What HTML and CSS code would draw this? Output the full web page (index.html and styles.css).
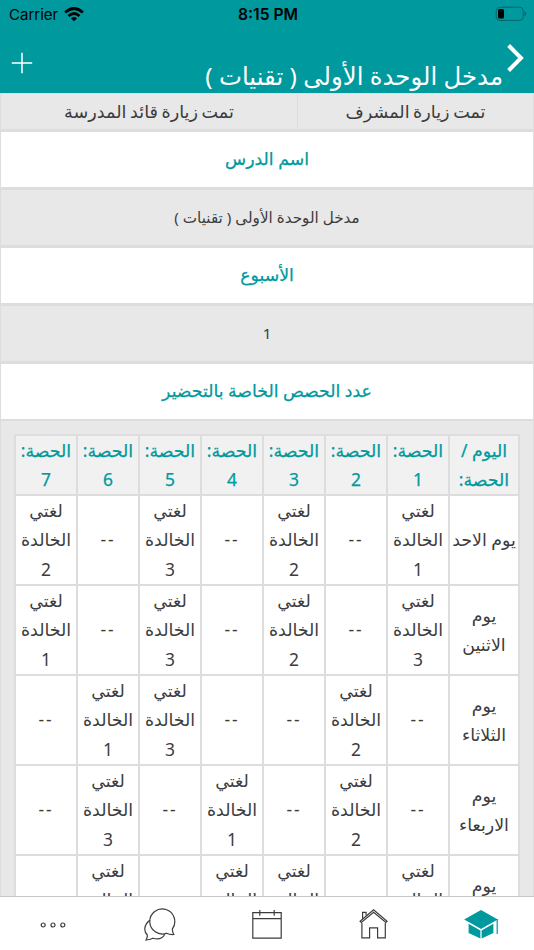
FILE: index.html
```html
<!DOCTYPE html>
<html lang="ar" dir="rtl">

<head>
    <meta charset="UTF-8">
    <meta name="viewport" content="width=device-width, initial-scale=1.0">
    <title>مدخل الوحدة الأولى</title>
    <link rel="stylesheet" href="styles.css">
</head>

<body>
    <header class="header">
        <div class="status" dir="ltr">
            <div class="carrier">
                <span>Carrier</span>
                <svg width="20" height="15" viewBox="0 0 20 15">
                    <g fill="none" stroke="#000" stroke-width="2.7">
                        <path d="M1.1 5.4Q10-2.4 18.9 5.4"/>
                        <path d="M4.5 8.9Q10 4.1 15.5 8.9"/>
                    </g>
                    <path d="M6.9 11.2Q10 8.6 13.1 11.2L10 14.3Z"/>
                </svg>
            </div>
            <span class="time">8:15 PM</span>
            <svg class="battery" width="32" height="16" viewBox="0 0 32 16">
                <rect x="1.2" y="1.2" width="27" height="13.2" rx="3.6" fill="none" stroke="#04666a"/>
                <rect x="3" y="3" width="6" height="9.6" rx="1.5"/>
                <path d="M29.5 5.3Q31.2 6 31.2 7.8T29.5 10.3Z" fill="#04666a"/>
            </svg>
        </div>
        <div class="nav">
            <svg class="back" width="18" height="28" viewBox="0 0 18 28">
                <path d="M1.6 1.5L14 14L1.6 26.5" fill="none" stroke="#fff" stroke-width="4"/>
            </svg>
            <h1>مدخل الوحدة الأولى ( تقنيات )</h1>
            <svg class="add" width="22" height="22" viewBox="0 0 22 22">
                <path d="M11 .8V21.2M.8 11H21.2" stroke="#fff" stroke-width="1.5"/>
            </svg>
        </div>
    </header>

    <main class="content">
        <div class="visits">
            <div class="visit">تمت زيارة المشرف</div>
            <div class="visit">تمت زيارة قائد المدرسة</div>
        </div>
        <div class="row label">اسم الدرس</div>
        <div class="row value">مدخل الوحدة الأولى ( تقنيات )</div>
        <div class="row label">الأسبوع</div>
        <div class="row value">1</div>
        <div class="row label">عدد الحصص الخاصة بالتحضير</div>

        <div class="schedule">
            <table>
                <colgroup>
                    <col class="day">
                    <col span="7">
                </colgroup>
                <thead>
                    <tr>
                        <th>اليوم /<br>الحصة:</th>
                        <th>الحصة:<br>1</th>
                        <th>الحصة:<br>2</th>
                        <th>الحصة:<br>3</th>
                        <th>الحصة:<br>4</th>
                        <th>الحصة:<br>5</th>
                        <th>الحصة:<br>6</th>
                        <th>الحصة:<br>7</th>
                    </tr>
                </thead>
                <tbody>
                    <tr>
                        <td>يوم الاحد</td>
                        <td>لغتي<br>الخالدة<br>1</td>
                        <td class="none">--</td>
                        <td>لغتي<br>الخالدة<br>2</td>
                        <td class="none">--</td>
                        <td>لغتي<br>الخالدة<br>3</td>
                        <td class="none">--</td>
                        <td>لغتي<br>الخالدة<br>2</td>
                    </tr>
                    <tr>
                        <td>يوم<br>الاثنين</td>
                        <td>لغتي<br>الخالدة<br>3</td>
                        <td class="none">--</td>
                        <td>لغتي<br>الخالدة<br>2</td>
                        <td class="none">--</td>
                        <td>لغتي<br>الخالدة<br>3</td>
                        <td class="none">--</td>
                        <td>لغتي<br>الخالدة<br>1</td>
                    </tr>
                    <tr>
                        <td>يوم<br>الثلاثاء</td>
                        <td class="none">--</td>
                        <td>لغتي<br>الخالدة<br>2</td>
                        <td class="none">--</td>
                        <td class="none">--</td>
                        <td>لغتي<br>الخالدة<br>3</td>
                        <td>لغتي<br>الخالدة<br>1</td>
                        <td class="none">--</td>
                    </tr>
                    <tr>
                        <td>يوم<br>الاربعاء</td>
                        <td class="none">--</td>
                        <td>لغتي<br>الخالدة<br>2</td>
                        <td class="none">--</td>
                        <td>لغتي<br>الخالدة<br>1</td>
                        <td class="none">--</td>
                        <td>لغتي<br>الخالدة<br>3</td>
                        <td class="none">--</td>
                    </tr>
                    <tr>
                        <td>يوم<br>الخميس</td>
                        <td>لغتي<br>الخالدة<br>1</td>
                        <td class="none"></td>
                        <td>لغتي<br>الخالدة<br>3</td>
                        <td>لغتي<br>الخالدة<br>2</td>
                        <td class="none"></td>
                        <td>لغتي<br>الخالدة<br>1</td>
                        <td class="none"></td>
                    </tr>
                </tbody>
            </table>
        </div>
    </main>

    <nav class="tabs">
        <a class="tab">
            <svg width="36" height="32" viewBox="0 0 36 32" fill="#00999e">
                <path d="M18 1L34.8 10.4L18 20L1.2 10.4Z"/>
                <path d="M5.6 14.8L17.4 21.4V29.6L5.6 24Z"/>
                <path d="M18.6 21.4L30.4 14.8V24L18.6 29.6Z"/>
                <path d="M17.9 20.7L5.2 13.6M18.1 20.7L30.8 13.6" stroke="#fff" stroke-width=".8"/>
                <path d="M34.2 10V25" stroke="#00999e" stroke-width="1.2"/>
            </svg>
        </a>
        <a class="tab">
            <svg width="30" height="32" viewBox="0 0 30 32" fill="none" stroke="#3c3c3c" stroke-width="1.2">
                <path d="M1.1 12.2L14.6 .9L28.1 12.2L26.9 13.5L14.6 3.4L2.3 13.5Z"/>
                <path d="M3.6 9.8V3.3H7.1V6.5"/>
                <path d="M2.9 14V28.9H10.6V18.9H18.6V28.9H26.3V14"/>
            </svg>
        </a>
        <a class="tab">
            <svg width="30" height="32" viewBox="0 0 30 32" fill="none" stroke="#3c3c3c" stroke-width="1.2">
                <path d="M.8 3.7H29.2V29.2H.8ZM.8 9.6H29.2M7.8 1V6.8M22.2 1V6.8"/>
            </svg>
        </a>
        <a class="tab">
            <svg width="32" height="34" viewBox="0 0 32 34" fill="none" stroke="#3c3c3c" stroke-width="1.2">
                <path d="M28.4 20.8A12.5 12.5 0 1 0 22.6 25.2Q26 26.8 29.8 26.5Q28.2 24 28.4 20.8Z"/>
                <path d="M5.8 12.2C-.5 17-.2 23.5 3.2 26.8Q3.7 29.8 2 32Q6 31.8 8.8 30.2C14 31.8 18.5 30.5 20.8 26.3"/>
            </svg>
        </a>
        <a class="tab">
            <svg width="26" height="8" viewBox="0 0 26 8" fill="none" stroke="#3c3c3c" stroke-width="1.2">
                <circle cx="3.2" cy="4" r="2"/>
                <circle cx="13" cy="4" r="2"/>
                <circle cx="22.8" cy="4" r="2"/>
            </svg>
        </a>
    </nav>
</body>

</html>
```

FILE: styles.css
```css
* {
    box-sizing: border-box;
}

body {
    margin: 0;
    height: 950px;
    display: flex;
    flex-direction: column;
    overflow: hidden;
    background-color: #fff;
    color: #3c3c3c;
    font-family: "Noto Sans", "DejaVu Sans", sans-serif;
    white-space: nowrap;
}

.header {
    flex: none;
    height: 93px;
    background-color: #00999e;
}

.status {
    display: grid;
    grid-template-columns: 1fr auto 1fr;
    align-items: center;
    height: 28px;
    padding: 0 7px 0 9px;
    color: #000;
    font-family: Inter, sans-serif;
    font-size: 15px;
}

.carrier {
    display: flex;
    align-items: center;
    gap: 6px;
}

.time {
    font-size: 15.7px;
    font-weight: 600;
}

.battery {
    justify-self: end;
}

.nav {
    display: flex;
    height: 65px;
    padding: 0 9px 0 11px;
}

.back {
    margin-top: 16px;
}

.nav h1 {
    flex: 1;
    margin: 32px 4px 0 0;
    font-size: 24.4px;
    font-weight: normal;
    line-height: 32px;
    color: #fff;
}

.add {
    margin-top: 24px;
}

.content {
    flex: 1;
    min-height: 0;
    overflow: hidden;
    background-color: #e8e8e8;
}

.visits {
    display: grid;
    grid-template-columns: 235px 1fr;
    height: 38px;
    border: 1px solid #ddd;
    border-bottom-width: 2px;
}

.visit {
    text-align: center;
    font-size: 17.6px;
    line-height: 34px;
    word-spacing: -1px;
}

.visit + .visit {
    border-right: 1px solid #ddd;
}

.row {
    display: flex;
    align-items: center;
    justify-content: center;
    height: 58px;
    padding-bottom: 2px;
    border: 1px solid #ddd;
    border-bottom-width: 2px;
}

.label {
    background-color: #fff;
    color: #00999e;
    font-size: 17.3px;
    -webkit-text-stroke: 0.25px;
}

.value {
    font-size: 15.2px;
}

.schedule {
    padding: 13px 13px 14px;
    border: 1px solid #ddd;
    border-top: 0;
}

table {
    width: 506px;
    table-layout: fixed;
    border-collapse: collapse;
    background-color: #fff;
    font-size: 17.4px;
    line-height: 29.33px;
}

.day {
    width: 70px;
}

th,
td {
    padding: 0;
    border: 2px solid #ddd;
    text-align: center;
}

th {
    height: 60px;
    background-color: #f1f1f1;
    color: #00999e;
    font-weight: normal;
    line-height: 29px;
    -webkit-text-stroke: 0.25px;
}

td {
    height: 90px;
}

.none {
    letter-spacing: 2px;
}

.tabs {
    flex: none;
    display: flex;
    height: 54px;
    padding-top: 3px;
    border-top: 1px solid #c8c8c8;
    background-color: #fff;
}

.tab {
    flex: 1;
    display: flex;
    align-items: center;
    justify-content: center;
}
```
